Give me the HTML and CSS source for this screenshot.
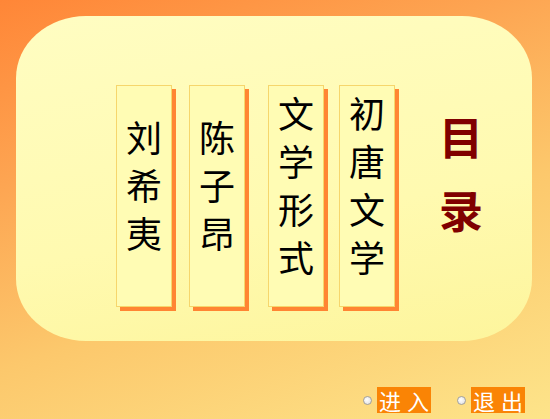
FILE: index.html
```html
<!doctype html>
<html lang="zh">
    <head>
        <meta charset="utf-8">
        <title>初唐文学 目录</title>
        <meta name="viewport" content="width=device-width, initial-scale=1">
        <link rel="stylesheet" href="styles.css">
    </head>
    <body>
        <main class="stage">
            <section class="panel">
                <div class="card">
                    <span class="card-text">刘希夷</span>
                </div>
                <div class="card">
                    <span class="card-text">陈子昂</span>
                </div>
                <div class="card card-far">
                    <span class="card-text">文学形式</span>
                </div>
                <div class="card card-near">
                    <span class="card-text">初唐文学</span>
                </div>
                <h1 class="title">目录</h1>
            </section>
            <nav class="actions">
                <a class="action" href="#">
                    <span class="radio"></span>
                    <span class="action-label">进入</span>
                </a>
                <a class="action" href="#">
                    <span class="radio"></span>
                    <span class="action-label">退出</span>
                </a>
            </nav>
        </main>
    </body>
</html>
```

FILE: styles.css
```css
* {
    padding: 0;
    border: 0;
    margin: 0;
    box-sizing: border-box;
    font-family: "Noto Sans CJK SC", sans-serif;
}

body {
    width: 550px;
    height: 419px;
    overflow: hidden;
}

.stage {
    width: 550px;
    height: 419px;
    padding: 16px 0 0 16px;
    background: #ff8a3c;
    background: linear-gradient(160deg, #ff8637 0%, #fda552 30%, #fcc86c 60%, #fde48a 100%);
}

.panel {
    width: 516px;
    height: 325px;
    border-radius: 70px / 62px;
    background: linear-gradient(170deg, #fffdc2 0%, #fffab0 60%, #fdf59c 100%);
    display: flex;
    align-items: flex-start;
    padding: 69px 0 0 100px;
    gap: 17px;
}

.card {
    width: 56px;
    height: 222px;
    border: 1px solid #f6d66c;
    background: #fffcb4;
    box-shadow: 4px 4px 0 #ff8533;
    display: flex;
    align-items: center;
    justify-content: center;
    padding-bottom: 8px;
}

.card-far {
    margin-left: 6px;
}

.card-near {
    margin-left: -2px;
}

.card-text {
    writing-mode: vertical-rl;
    font-size: 36px;
    line-height: 56px;
    letter-spacing: 12px;
    color: #000;
    font-weight: 400;
}

.title {
    width: 44px;
    margin: 31px 0 0 27px;
    writing-mode: vertical-rl;
    font-size: 44px;
    line-height: 44px;
    letter-spacing: 29px;
    font-weight: 700;
    color: #800000;
}

.actions {
    display: flex;
    justify-content: flex-end;
    gap: 26px;
    padding-right: 25px;
    margin-top: 46px;
}

.action {
    display: flex;
    align-items: center;
    gap: 5px;
    text-decoration: none;
}

.radio {
    width: 9px;
    height: 9px;
    border-radius: 50%;
    border: 1px solid #a0a0a0;
    background: radial-gradient(circle at 40% 40%, #ffffff 0%, #e6e6e6 70%, #b5b5b5 100%);
}

.action-label {
    width: 54px;
    height: 26px;
    background-color: #fa8405;
    color: #fff;
    font-size: 22px;
    line-height: 26px;
    letter-spacing: 6px;
    padding-left: 2px;
    white-space: nowrap;
}
```
